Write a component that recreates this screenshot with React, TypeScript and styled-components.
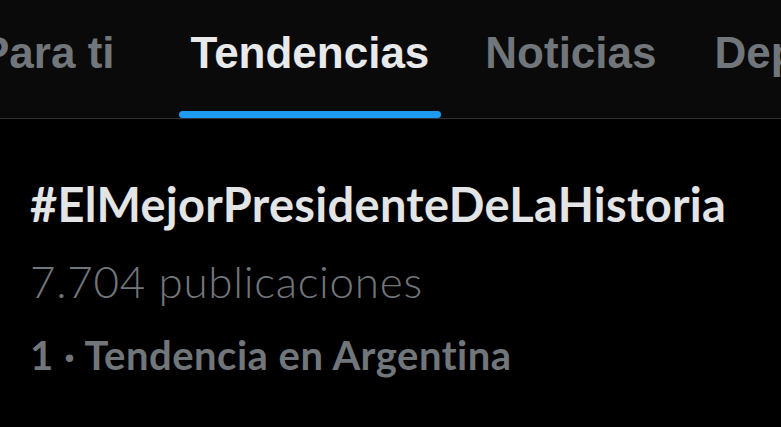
import styled, { createGlobalStyle } from "styled-components";

const GlobalStyle = createGlobalStyle`
  html, body {
    margin: 0;
    padding: 0;
    background: #000000;
  }
  body {
    width: 781px;
    height: 427px;
    overflow: hidden;
  }
`;

const Page = styled.div`
  width: 781px;
  height: 427px;
  background: #000000;
  overflow: hidden;
`;

const TabBar = styled.nav`
  height: 118px;
  background: #0a0a0a;
  border-bottom: 1px solid #2f3336;
  overflow: hidden;
`;

const TabList = styled.div`
  display: flex;
  height: 100%;
  margin-left: -32px;
  white-space: nowrap;
`;

const Tab = styled.div<{ $gap: number }>`
  display: flex;
  flex-direction: column;
  justify-content: space-between;
  flex-shrink: 0;
  margin-right: ${(props) => props.$gap}px;
`;

const TabLabel = styled.span<{ $active: boolean }>`
  padding: 31px 12px 0;
  font-family: "Liberation Sans", Arial, sans-serif;
  font-weight: 700;
  font-size: 44px;
  line-height: 44px;
  color: ${(props) => (props.$active ? "#e7e9ea" : "#71767b")};
`;

const Indicator = styled.div<{ $active: boolean }>`
  height: 7px;
  border-radius: 4px;
  background: ${(props) => (props.$active ? "#1d9bf0" : "transparent")};
`;

const Trend = styled.section`
  padding: 57px 30px 0;
  font-family: Lato, "Noto Sans", sans-serif;
  font-variant-ligatures: none;
`;

const Hashtag = styled.div`
  font-size: 47px;
  font-weight: 700;
  letter-spacing: 0.3px;
  line-height: 56px;
  color: #e2e4e5;
  white-space: nowrap;
`;

const PostCount = styled.div`
  margin-top: 21px;
  font-size: 44px;
  font-weight: 300;
  letter-spacing: 0.7px;
  line-height: 56px;
  color: #71767b;
`;

const Context = styled.div`
  margin-top: 21px;
  font-size: 40px;
  font-weight: 700;
  letter-spacing: 0.5px;
  line-height: 50px;
  color: #71767b;
`;

const tabs = [
  { label: "Para ti", active: false, gap: 52 },
  { label: "Tendencias", active: true, gap: 32 },
  { label: "Noticias", active: false, gap: 34 },
  { label: "Deportes", active: false, gap: 34 },
];

export default function App() {
  return (
    <Page>
      <GlobalStyle />
      <TabBar>
        <TabList>
          {tabs.map((tab) => (
            <Tab key={tab.label} $gap={tab.gap}>
              <TabLabel $active={tab.active}>{tab.label}</TabLabel>
              <Indicator $active={tab.active} />
            </Tab>
          ))}
        </TabList>
      </TabBar>
      <Trend>
        <Hashtag>#ElMejorPresidenteDeLaHistoria</Hashtag>
        <PostCount>7.704 publicaciones</PostCount>
        <Context>1 · Tendencia en Argentina</Context>
      </Trend>
    </Page>
  );
}
